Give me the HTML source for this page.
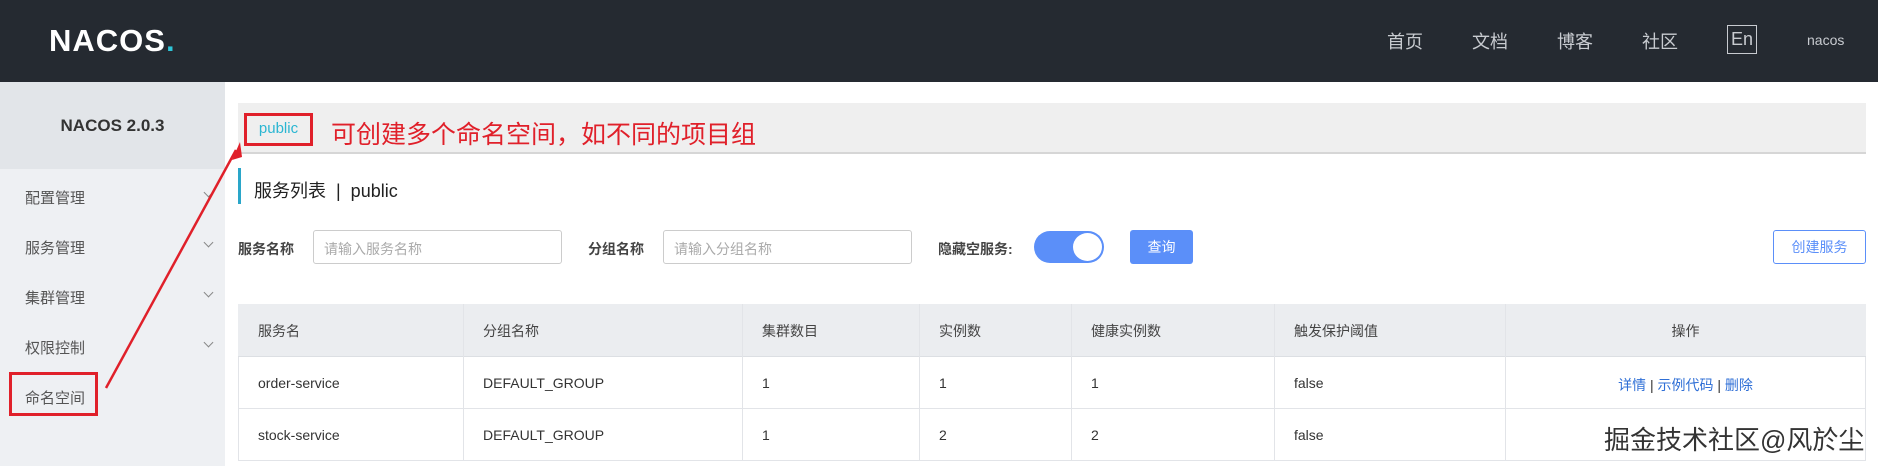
<!DOCTYPE html>
<html><head><meta charset="utf-8"><style>
*{margin:0;padding:0;box-sizing:border-box}
body{width:1878px;height:466px;overflow:hidden;background:#fff;font-family:"Liberation Sans","Noto Sans CJK SC",sans-serif;position:relative;color:#333}
.a{position:absolute}
.hdr{left:0;top:0;width:1878px;height:82px;background:#252a31}
.nav{color:#c8cbd0;font-size:18px;top:28px}
.side{left:0;top:82px;width:225px;height:384px;background:#eef0f3}
.sidetop{left:0;top:82px;width:225px;height:87px;background:#e2e5e9}
.mi{left:25px;font-size:15px;color:#555}
.chev{left:205px;width:7px;height:7px;border-right:1px solid #888;border-bottom:1px solid #888;transform:rotate(45deg)}
.lbl{font-size:14px;font-weight:bold;color:#444;top:239px}
.inp{top:230px;height:34px;border:1px solid #ccc;border-radius:3px;font-size:14px;color:#aaa;padding:8px 10px}
.th{font-size:14px;color:#444;top:321px}
.td{font-size:14px;color:#333}
.vl{width:1px;background:#e2e4e8;top:304px;height:157px}
</style></head><body>
<div class="a hdr"></div>
<div class="a" style="left:49px;top:23px;font-size:31px;font-weight:bold;color:#fff;letter-spacing:1px">NACOS<span style="color:#2ec5d8">.</span></div>
<div class="a nav" style="left:1387px">首页</div>
<div class="a nav" style="left:1472px">文档</div>
<div class="a nav" style="left:1557px">博客</div>
<div class="a nav" style="left:1642px">社区</div>
<div class="a" style="left:1727px;top:25px;width:30px;height:29px;border:1px solid #c8cbd0;color:#c8cbd0;font-size:18px;text-align:center;line-height:27px">En</div>
<div class="a" style="left:1807px;top:32px;color:#c8cbd0;font-size:14px">nacos</div>
<div class="a side"></div><div class="a sidetop"></div>
<div class="a" style="left:0;width:225px;top:116px;text-align:center;font-size:17px;font-weight:bold;color:#333">NACOS 2.0.3</div>
<div class="a mi" style="top:187px">配置管理</div><div class="a chev" style="top:189px"></div>
<div class="a mi" style="top:237px">服务管理</div><div class="a chev" style="top:239px"></div>
<div class="a mi" style="top:287px">集群管理</div><div class="a chev" style="top:289px"></div>
<div class="a mi" style="top:337px">权限控制</div><div class="a chev" style="top:339px"></div>
<div class="a mi" style="top:387px">命名空间</div>
<div class="a" style="left:9px;top:372px;width:89px;height:44px;border:3px solid #e0202a"></div>
<div class="a" style="left:238px;top:103px;width:1628px;height:51px;background:#efefef;border-bottom:2px solid #d6d6d6"></div>
<div class="a" style="left:244px;top:113px;width:69px;height:33px;border:3px solid #e0202a;color:#2bb6d2;font-size:15px;text-align:center;line-height:26px">public</div>
<div class="a" style="left:331px;top:115px;font-size:25px;color:#e0202a">可创建多个命名空间，如不同的项目组</div>
<div class="a" style="left:238px;top:168px;width:3px;height:36px;background:#2aa6c9"></div>
<div class="a" style="left:254px;top:177px;font-size:18px;color:#222">服务列表 &nbsp;|&nbsp; public</div>
<div class="a lbl" style="left:238px">服务名称</div>
<div class="a inp" style="left:313px;width:249px">请输入服务名称</div>
<div class="a lbl" style="left:588px">分组名称</div>
<div class="a inp" style="left:663px;width:249px">请输入分组名称</div>
<div class="a lbl" style="left:938px">隐藏空服务:</div>
<div class="a" style="left:1034px;top:231px;width:70px;height:32px;border-radius:16px;background:#5b8ff9"></div>
<div class="a" style="left:1073px;top:233px;width:29px;height:28px;border-radius:50%;background:#fff"></div>
<div class="a" style="left:1130px;top:230px;width:63px;height:34px;background:#5b8ff9;border-radius:3px;color:#fff;font-size:14px;text-align:center;line-height:34px">查询</div>
<div class="a" style="left:1773px;top:230px;width:93px;height:34px;border:1px solid #5b8ff9;border-radius:3px;color:#5b8ff9;font-size:14px;text-align:center;line-height:32px">创建服务</div>
<div class="a" style="left:238px;top:304px;width:1628px;height:157px;border:1px solid #e2e4e8"></div>
<div class="a" style="left:238px;top:304px;width:1628px;height:53px;background:#ebedf0;border-bottom:1px solid #dcdfe3"></div>
<div class="a" style="left:238px;top:408px;width:1628px;height:1px;background:#e2e4e8"></div>
<div class="a vl" style="left:463px"></div><div class="a vl" style="left:742px"></div><div class="a vl" style="left:919px"></div><div class="a vl" style="left:1071px"></div><div class="a vl" style="left:1274px"></div><div class="a vl" style="left:1505px"></div>
<div class="a th" style="left:258px">服务名</div><div class="a th" style="left:483px">分组名称</div><div class="a th" style="left:762px">集群数目</div><div class="a th" style="left:939px">实例数</div><div class="a th" style="left:1091px">健康实例数</div><div class="a th" style="left:1294px">触发保护阈值</div><div class="a th" style="left:1505px;width:361px;text-align:center">操作</div>
<div class="a td" style="left:258px;top:375px">order-service</div><div class="a td" style="left:483px;top:375px">DEFAULT_GROUP</div><div class="a td" style="left:762px;top:375px">1</div><div class="a td" style="left:939px;top:375px">1</div><div class="a td" style="left:1091px;top:375px">1</div><div class="a td" style="left:1294px;top:375px">false</div>
<div class="a td" style="left:1505px;width:361px;text-align:center;top:375px;color:#2f6fd6">详情 <span style="color:#333">|</span> 示例代码 <span style="color:#333">|</span> 删除</div>
<div class="a td" style="left:258px;top:427px">stock-service</div><div class="a td" style="left:483px;top:427px">DEFAULT_GROUP</div><div class="a td" style="left:762px;top:427px">1</div><div class="a td" style="left:939px;top:427px">2</div><div class="a td" style="left:1091px;top:427px">2</div><div class="a td" style="left:1294px;top:427px">false</div>
<div class="a" style="left:1604px;top:420px;font-size:26px;color:#333;text-shadow:0 0 2px #fff,0 0 2px #fff">掘金技术社区@风於尘</div>
<svg class="a" style="left:0;top:0" width="1878" height="466"><line x1="106" y1="388" x2="236" y2="150" stroke="#e0202a" stroke-width="2.5"/><polygon points="240,142 232,160 242,157" fill="#e0202a"/></svg>
</body></html>
